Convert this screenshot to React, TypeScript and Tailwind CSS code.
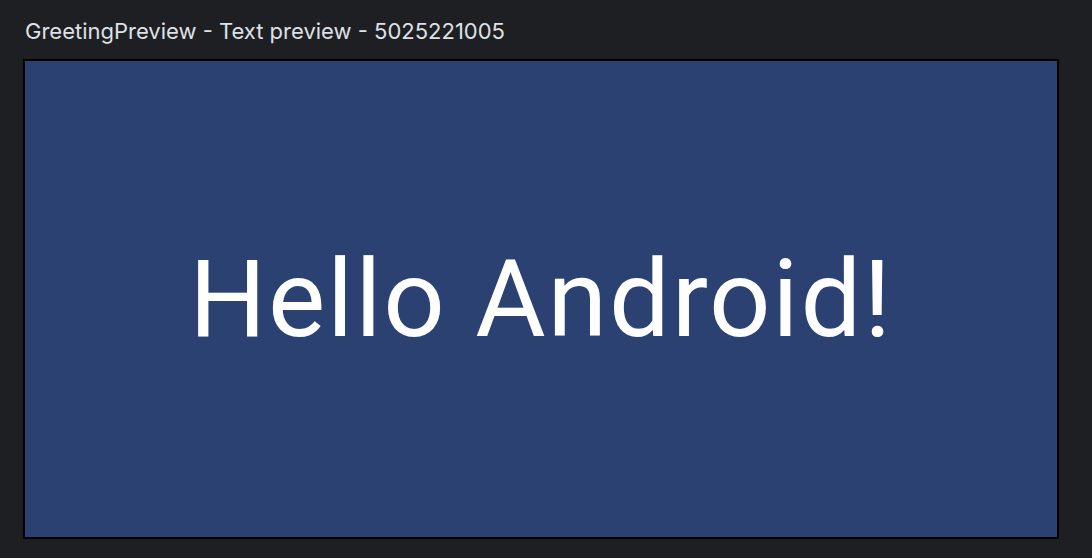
export default function App() {
  return (
    <div className="w-[1092px] h-[558px] bg-[#1e1f22] overflow-hidden" style={{ fontFamily: "Inter, 'Noto Sans', sans-serif" }}>
      <div className="pl-[25px] pt-[17px] h-[59px] text-[22px] leading-[28px] text-[#dfe1e5]">
        GreetingPreview - Text preview - 5025221005
      </div>
      <div className="ml-[23px] w-[1036px] h-[480px] border-2 border-black bg-[#2a4172] flex items-center justify-center">
        <span className="text-white text-[108px] leading-none tracking-[1.8px]" style={{ fontFamily: "Roboto, sans-serif" }}>
          Hello Android!
        </span>
      </div>
    </div>
  );
}
